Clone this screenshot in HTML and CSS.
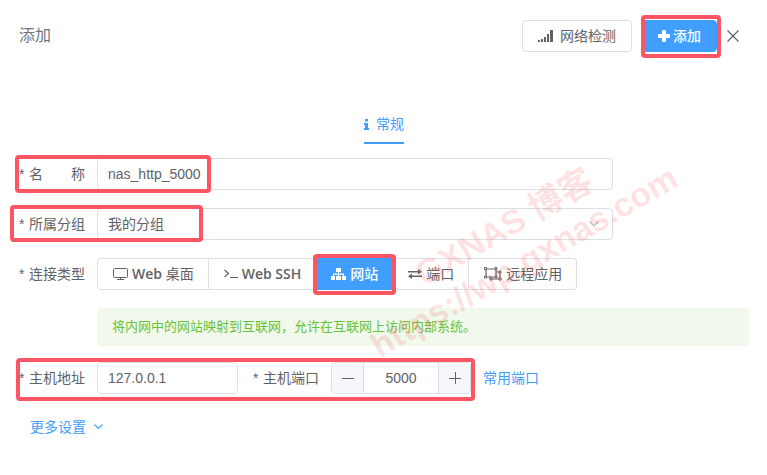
FILE: index.html
```html
<!DOCTYPE html>
<html lang="zh-CN">
<head>
<meta charset="utf-8">
<meta name="viewport" content="width=device-width, initial-scale=1">
<title>添加</title>
<link rel="stylesheet" href="styles.css">
</head>
<body>
<form class="dialog">
  <header class="header">
    <h1 class="title">添加</h1>
    <div class="actions">
      <button type="button" class="btn">
        <svg class="signal" width="15" height="12" viewBox="0 0 15 12" fill="currentColor" aria-hidden="true"><path d="M0 10h2v2H0zM3 9h2v3H3zM6 7h2v5H6zM9 4h2v8H9zM12 0h3v12h-3z"/></svg>
        网络检测
      </button>
      <span class="marked mark-add">
        <button type="submit" class="btn btn-primary">
          <svg width="12" height="12" viewBox="0 0 12 12" fill="currentColor" aria-hidden="true"><path d="M5 0h2q1 0 1 1v3h3q1 0 1 1v2q0 1-1 1H8v3q0 1-1 1H5q-1 0-1-1V8H1Q0 8 0 7V5q0-1 1-1h3V1q0-1 1-1z"/></svg>
          添加
        </button>
      </span>
      <button type="button" class="close" aria-label="关闭">
        <svg width="12" height="12" viewBox="0 0 12 12" fill="none" stroke="currentColor" stroke-width="1.2" aria-hidden="true"><path d="M.5.5l11 11M11.5.5l-11 11"/></svg>
      </button>
    </div>
  </header>

  <nav class="tabs">
    <a class="tab" href="#general">
      <svg width="5" height="11" viewBox="0 0 5 11" fill="currentColor" aria-hidden="true"><path d="M1 0h3v2.500H1zM0 4h4v5h1v2H0V9h1V6H0z"/></svg>
      常规
    </a>
  </nav>

  <main class="body" id="general">
    <div class="row marked mark-name">
      <label class="label" for="name"><span class="star">*</span><span class="spread"><span>名</span><span>称</span></span></label>
      <input class="input field" id="name" type="text" value="nas_http_5000">
    </div>

    <div class="row marked mark-group">
      <label class="label" for="group"><span class="star">*</span>所属分组</label>
      <div class="select field">
        <select class="input" id="group"><option>我的分组</option></select>
        <svg class="arrow" width="10" height="6" viewBox="0 0 10 6" fill="none" stroke="currentColor" stroke-width="1.2" aria-hidden="true"><path d="M.5.5L5 5L9.500.5"/></svg>
      </div>
    </div>

    <div class="row" role="radiogroup" aria-labelledby="type-label">
      <span class="label" id="type-label"><span class="star">*</span>连接类型</span>
      <div class="segments">
        <label class="segment"><input type="radio" name="type">
          <svg width="15" height="12" viewBox="0 0 15 12" fill="none" stroke="currentColor" aria-hidden="true"><path d="M1.500.5h12q1 0 1 1v7q0 1-1 1h-12q-1 0-1-1v-7q0-1 1-1zM7.500 9.500v2M4 11.500h7"/></svg>
          <span><b>Web</b> 桌面</span></label>
        <label class="segment"><input type="radio" name="type">
          <svg width="14" height="10" viewBox="0 0 14 10" fill="none" stroke="currentColor" stroke-width="1.2" aria-hidden="true"><path d="M.5 1L4.500 4.500L.5 8M6 8.500h8"/></svg>
          <b>Web SSH</b></label>
        <label class="segment marked mark-site"><input type="radio" name="type" checked>
          <svg width="15" height="12" viewBox="0 0 15 12" fill="currentColor" aria-hidden="true"><path d="M5 0h5v4H8v1.500h5V8h2v4h-4V8h1V6.700H8V8h2v4H5V8h2V6.700H3V8h1v4H0V8h2V5.500h5V4H5z"/></svg>
          网站</label>
        <label class="segment"><input type="radio" name="type">
          <svg width="14" height="10" viewBox="0 0 14 10" fill="currentColor" aria-hidden="true"><path d="M0 2h10V0l4 2.800L10 5.500v-2H0zM14 6.500H4v-2L0 7.300L4 10V8h10z"/></svg>
          端口</label>
        <label class="segment"><input type="radio" name="type">
          <svg width="18" height="14" viewBox="0 0 18 14" fill="none" stroke="currentColor" aria-hidden="true"><path d="M2 2h10v8H2zM12 5h4v7H7V10" stroke-width="1.2"/><path d="M.5.5h2v2h-2zM11 .5h2v2h-2zM.5 9h2v2h-2zM11 9h2v2h-2zM15 4h2v2h-2zM15 11h2v2h-2zM6 11h2v2H6z" fill="#fff"/></svg>
          远程应用</label>
      </div>
    </div>

    <p class="notice">将内网中的网站映射到互联网，允许在互联网上访问内部系统。</p>

    <div class="row">
      <div class="pair marked mark-host">
        <label class="label" for="host"><span class="star">*</span>主机地址</label>
        <input class="input host" id="host" type="text" value="127.0.0.1">
        <label class="label port-label" for="port"><span class="star">*</span>主机端口</label>
        <div class="stepper">
          <button type="button" class="step" aria-label="减少"><svg width="12" height="12" viewBox="0 0 12 12" stroke="currentColor" aria-hidden="true"><path d="M0 6.500h12"/></svg></button>
          <input class="port" id="port" type="text" inputmode="numeric" value="5000">
          <button type="button" class="step" aria-label="增加"><svg width="12" height="12" viewBox="0 0 12 12" stroke="currentColor" aria-hidden="true"><path d="M0 6.500h12M6.500 0v12"/></svg></button>
        </div>
      </div>
      <a class="link" href="#ports">常用端口</a>
    </div>

    <button type="button" class="more">更多设置
      <svg width="9" height="6" viewBox="0 0 9 6" fill="none" stroke="currentColor" stroke-width="1.2" aria-hidden="true"><path d="M.5.5l4 4l4-4"/></svg>
    </button>
  </main>

  <div class="watermark">GXNAS 博客<br>https://wp.gxnas.com</div>
</form>
</body>
</html>
```
FILE: styles.css
```css
*,
*::after {
  box-sizing: border-box;
}

body {
  margin: 0;
  background: #fff;
  color: #606266;
  font: 14px/20px "Liberation Sans", "Noto Sans CJK SC", sans-serif;
}

button,
input,
select {
  margin: 0;
  color: inherit;
  font: inherit;
}

svg {
  flex: none;
}

a {
  color: #409eff;
  text-decoration: none;
}

.dialog {
  position: relative;
  padding: 20px 18px 20px 19px;
  overflow: hidden;
}

.header {
  display: flex;
  align-items: center;
  justify-content: space-between;
  padding-right: 10px;
}

.title {
  margin: 0;
  color: #72767b;
  font-size: 16px;
  font-weight: 400;
}

.actions {
  display: flex;
  align-items: center;
  gap: 10px;
}

.btn {
  display: flex;
  align-items: center;
  gap: 3px;
  height: 32px;
  padding: 0 15px;
  border: 1px solid #dcdfe6;
  border-radius: 4px;
  background: #fff;
}

.signal {
  margin-right: 4px;
}

.btn-primary {
  border-color: #409eff;
  background: #409eff;
  color: #fff;
  font-weight: 500;
}

.close {
  display: flex;
  padding: 0;
  border: 0;
  background: none;
}

/* Red callout frames drawn over the controls they point at */
.marked {
  position: relative;
}

.marked::after {
  content: "";
  position: absolute;
  z-index: 1;
  border: 4px solid #fc5563;
  border-radius: 4px;
  pointer-events: none;
}

.mark-add::after {
  inset: -5px -4px -6px -1px;
}

.mark-name::after {
  inset: -3px auto -3px -4px;
  width: 196px;
}

.mark-group::after {
  inset: -3px auto -2px -9px;
  width: 193px;
}

.mark-site::after {
  inset: -5px -4px -6px -3px;
}

.mark-host::after {
  inset: -4px -4px -7px -3px;
}

.tabs {
  display: flex;
  justify-content: center;
  margin-top: 62px;
}

.tab {
  display: flex;
  align-items: center;
  gap: 7px;
  padding-bottom: 8px;
  border-bottom: 2px solid #409eff;
}

.body {
  margin-top: 14px;
}

.row,
.pair {
  display: flex;
  align-items: center;
}

.row {
  margin-bottom: 18px;
}

.label {
  display: flex;
  flex: none;
  width: 78px;
}

.star {
  width: 10px;
}

.spread {
  display: flex;
  justify-content: space-between;
  width: 56px;
}

.input {
  width: 100%;
  height: 32px;
  padding: 0 10px;
  border: 1px solid #dcdfe6;
  border-radius: 4px;
  background: #fff;
}

.field {
  flex: 0 1 516px;
  min-width: 0;
}

.select {
  position: relative;
}

.select .input {
  appearance: none;
}

.arrow {
  position: absolute;
  top: 13px;
  right: 14px;
  color: #b4b8bf;
}

.segments {
  display: flex;
}

.segment {
  display: flex;
  align-items: center;
  gap: 4px;
  height: 32px;
  padding: 0 14px 0 15px;
  border: solid #dcdfe6;
  border-width: 1px 1px 1px 0;
  font-family: "Open Sans", "Noto Sans CJK SC", sans-serif;
  white-space: nowrap;
}

.segment b {
  font-weight: 600;
}

.segment:first-child {
  border-left-width: 1px;
  border-radius: 4px 0 0 4px;
}

.segment:last-child {
  border-radius: 0 4px 4px 0;
}

.segment input {
  position: absolute;
  opacity: 0;
  pointer-events: none;
}

.segment:has(input:checked) {
  border-color: #409eff;
  background: #409eff;
  color: #fff;
  font-weight: 500;
}

.notice {
  margin: 0 0 16px 78px;
  padding: 9px 15px;
  border-radius: 4px;
  background: #f0f9eb;
  color: #67c23a;
  font-size: 13px;
}

.host {
  width: 141px;
}

.port-label {
  margin-left: 15px;
}

.stepper {
  display: flex;
  width: 140px;
  height: 32px;
  border: 1px solid #dcdfe6;
  border-radius: 4px;
  overflow: hidden;
}

.step {
  display: flex;
  flex: none;
  align-items: center;
  justify-content: center;
  width: 31px;
  padding: 0;
  border: 0;
  background: #f5f7fa;
}

.port {
  width: 100%;
  min-width: 0;
  padding: 0;
  border: solid #dcdfe6;
  border-width: 0 1px;
  text-align: center;
}

.link {
  margin-left: 12px;
}

.more {
  display: flex;
  align-items: center;
  gap: 8px;
  margin: 23px 0 0 11px;
  padding: 0;
  border: 0;
  background: none;
  color: #409eff;
}

.watermark {
  position: absolute;
  top: 204px;
  left: 514px;
  z-index: 2;
  color: rgba(250, 70, 70, 0.16);
  font-size: 34px;
  font-weight: 700;
  line-height: 40px;
  text-align: center;
  white-space: nowrap;
  transform: translateX(-50%) rotate(-30deg);
  pointer-events: none;
}
```
